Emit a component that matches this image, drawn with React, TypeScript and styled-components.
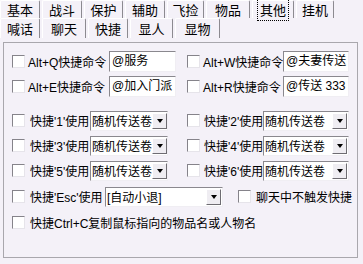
import React from "react";
import styled, { createGlobalStyle } from "styled-components";

const GlobalStyle = createGlobalStyle`
  html, body {
    margin: 0;
    padding: 0;
    background: #f4f1f8;
  }
  body {
    font-family: "Liberation Sans", "Noto Sans CJK SC", sans-serif;
    font-size: 12px;
    color: #000;
  }
`;

const Frame = styled.div`
  width: 363px;
  height: 264px;
  overflow: hidden;
  background: #f4f1f8;
`;

const TabRow = styled.div<{ $h: number }>`
  display: flex;
  height: ${(p) => p.$h}px;
`;

const Tab = styled.div<{ $w: number }>`
  box-sizing: border-box;
  width: ${(p) => p.$w}px;
  height: 100%;
  display: flex;
  align-items: center;
  justify-content: center;
  font-size: 13px;
  border-left: 1px solid #ffffff;
  border-top: 1px solid #ffffff;
  border-right: 1px solid #8c8a90;
  border-radius: 2px 2px 0 0;
  margin-left: 2px;
  &:first-child {
    margin-left: 0;
  }
`;

const FocusLabel = styled.span`
  outline: 1px dotted #000;
  outline-offset: 1px;
  padding: 0 1px;
`;

const Panel = styled.div`
  box-sizing: border-box;
  margin: 4px 0 0 3px;
  width: 355px;
  height: 216px;
  border: 1px solid #a9a7ad;
  padding: 8px 0 0 8px;
  display: flex;
  flex-direction: column;
`;

const Row = styled.div<{ $top: number }>`
  display: flex;
  align-items: center;
  height: 21px;
  margin-top: ${(p) => p.$top}px;
  &:first-child {
    margin-top: 0;
  }
`;

const Half = styled.div<{ $w?: number }>`
  display: flex;
  align-items: center;
  flex: none;
  width: ${(p) => (p.$w ? `${p.$w}px` : "auto")};
`;

const Check = styled.span<{ $ml?: number; $mr?: number }>`
  box-sizing: border-box;
  flex: none;
  width: 13px;
  height: 13px;
  background: #ffffff;
  border: 1px solid;
  border-color: #85838a #e6e4ea #e6e4ea #85838a;
  margin-left: ${(p) => p.$ml ?? 0}px;
  margin-right: ${(p) => p.$mr ?? 3}px;
`;

const Label = styled.span<{ $w?: number }>`
  flex: none;
  white-space: nowrap;
  width: ${(p) => (p.$w ? `${p.$w}px` : "auto")};
`;

const TextBox = styled.div<{ $w: number }>`
  box-sizing: border-box;
  flex: none;
  width: ${(p) => p.$w}px;
  height: 21px;
  background: #ffffff;
  border: 1px solid;
  border-color: #8a888e #f0eef3 #f0eef3 #8a888e;
  padding: 0 2px;
  line-height: 19px;
  white-space: nowrap;
  overflow: hidden;
`;

const Combo = styled.div<{ $w: number }>`
  box-sizing: border-box;
  flex: none;
  display: flex;
  align-items: center;
  width: ${(p) => p.$w}px;
  height: 20px;
  background: #ffffff;
  border: 1px solid;
  border-color: #8a888e #f0eef3 #f0eef3 #8a888e;
  padding: 1px 1px 1px 1px;
`;

const ComboText = styled.span`
  flex: none;
  white-space: nowrap;
  font-size: 12px;
`;

const ArrowButton = styled.span`
  box-sizing: border-box;
  flex: none;
  margin-left: auto;
  width: 15px;
  height: 16px;
  background: #efedf2;
  border: 1px solid;
  border-color: #ffffff #6e6c72 #6e6c72 #ffffff;
  display: flex;
  align-items: center;
  justify-content: center;
  &::after {
    content: "";
    border-left: 3.5px solid transparent;
    border-right: 3.5px solid transparent;
    border-top: 4px solid #000;
  }
`;

const Select: React.FC<{ w: number; value: string }> = ({ w, value }) => (
  <Combo $w={w}>
    <ComboText>{value}</ComboText>
    <ArrowButton />
  </Combo>
);

const row1 = [
  { t: "基本", w: 40 },
  { t: "战斗", w: 40 },
  { t: "保护", w: 39 },
  { t: "辅助", w: 40 },
  { t: "飞捡", w: 37 },
  { t: "物品", w: 44 },
  { t: "其他", w: 42, focus: true },
  { t: "挂机", w: 38 },
];

const row2 = [
  { t: "喊话", w: 40 },
  { t: "聊天", w: 44 },
  { t: "快捷", w: 40 },
  { t: "显人", w: 43 },
  { t: "显物", w: 45 },
];

export default function App() {
  return (
    <Frame>
      <GlobalStyle />
      <TabRow $h={18}>
        {row1.map((t) => (
          <Tab key={t.t} $w={t.w}>
            {t.focus ? <FocusLabel>{t.t}</FocusLabel> : t.t}
          </Tab>
        ))}
      </TabRow>
      <TabRow $h={20}>
        {row2.map((t) => (
          <Tab key={t.t} $w={t.w}>
            {t.t}
          </Tab>
        ))}
      </TabRow>
      <Panel>
        <Row $top={0}>
          <Half $w={175}>
            <Check />
            <Label $w={81}>Alt+Q快捷命令</Label>
            <TextBox $w={67}>@服务</TextBox>
          </Half>
          <Half>
            <Check />
            <Label $w={80}>Alt+W快捷命令</Label>
            <TextBox $w={66}>@夫妻传送</TextBox>
          </Half>
        </Row>
        <Row $top={4}>
          <Half $w={175}>
            <Check />
            <Label $w={81}>Alt+E快捷命令</Label>
            <TextBox $w={67}>@加入门派</TextBox>
          </Half>
          <Half>
            <Check />
            <Label $w={80}>Alt+R快捷命令</Label>
            <TextBox $w={66}>@传送 333 3</TextBox>
          </Half>
        </Row>
        {[
          ["1", "2"],
          ["3", "4"],
          ["5", "6"],
        ].map(([a, b], i) => (
          <Row key={a} $top={i === 0 ? 13 : 4}>
            <Half $w={175}>
              <Check $mr={5} />
              <Label $w={60}>快捷'{a}'使用</Label>
              <Select w={78} value="随机传送卷" />
            </Half>
            <Half>
              <Check $mr={4} />
              <Label $w={59}>快捷'{b}'使用</Label>
              <Select w={86} value="随机传送卷" />
            </Half>
          </Row>
        ))}
        <Row $top={5}>
          <Half>
            <Check $mr={5} />
            <Label $w={75}>快捷'Esc'使用</Label>
            <Select w={118} value="[自动小退]" />
          </Half>
          <Half>
            <Check $ml={15} $mr={5} />
            <Label>聊天中不触发快捷</Label>
          </Half>
        </Row>
        <Row $top={5}>
          <Check $mr={5} />
          <Label>快捷Ctrl+C复制鼠标指向的物品名或人物名</Label>
        </Row>
      </Panel>
    </Frame>
  );
}
